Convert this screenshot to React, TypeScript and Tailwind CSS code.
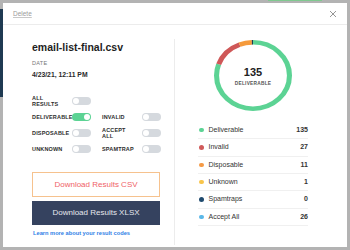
import React from "react";

const font = { fontFamily: "'Liberation Sans', Arial, sans-serif" };

function Toggle({ on = false }: { on?: boolean }) {
  return (
    <div
      className={
        "w-[19px] h-[8px] rounded-full flex items-center px-[1px] shrink-0 " +
        (on ? "bg-[#5cd394] justify-end" : "bg-[#d5d9de] justify-start")
      }
    >
      <div className="w-[6px] h-[6px] rounded-full bg-white" />
    </div>
  );
}

function Label({ children }: { children: React.ReactNode }) {
  return (
    <div className="w-[40px] text-[5.5px] leading-[6px] font-bold tracking-[0.03em] text-[#2d2d2d] uppercase">
      {children}
    </div>
  );
}

const legend = [
  { name: "Deliverable", value: 135, color: "#5cd394" },
  { name: "Invalid", value: 27, color: "#d05a5a" },
  { name: "Disposable", value: 11, color: "#f59a45" },
  { name: "Unknown", value: 1, color: "#f8c54a" },
  { name: "Spamtraps", value: 0, color: "#1f4a6e" },
  { name: "Accept All", value: 26, color: "#5ab8e8" },
];

function Donut() {
  const segs = [
    { start: 0, len: 80.5, color: "#5cd394" },
    { start: 80.5, len: 13.5, color: "#cf5858" },
    { start: 94, len: 5.5, color: "#f59a3b" },
    { start: 99.5, len: 0.5, color: "#1f3a52" },
  ];
  return (
    <div className="relative w-[78px] h-[71px] ml-[16px]">
      <svg width="78" height="71" viewBox="0 0 100 100" preserveAspectRatio="none" className="absolute inset-0">
        <g transform="rotate(-90 50 50)">
          {segs.map((s, i) => (
            <circle
              key={i}
              cx="50"
              cy="50"
              r="46.75"
              fill="none"
              stroke={s.color}
              strokeWidth="6.5"
              pathLength={100}
              strokeDasharray={`${s.len} ${100 - s.len}`}
              strokeDashoffset={-s.start}
            />
          ))}
        </g>
      </svg>
      <div className="absolute inset-0 flex flex-col items-center justify-center pt-[1px]">
        <div className="text-[11px] leading-[11px] font-bold text-[#222]">135</div>
        <div className="text-[4.8px] leading-[5px] font-bold tracking-[0.05em] text-[#555] mt-[3px]">DELIVERABLE</div>
      </div>
    </div>
  );
}

export default function App() {
  return (
    <div className="relative w-[350px] h-[250px] bg-[#b3b3b3] overflow-hidden p-[3px]" style={font}>
      <div className="absolute left-0 top-[9px] w-[3px] h-[88px] bg-[#1f3a52]" />
      <div className="absolute left-[268px] top-0 w-[54px] h-[1px] bg-[#7fc98f]" />
      <div className="relative w-[344px] h-[244px] bg-white flex flex-col">
        <div className="h-[22px] shrink-0 border-b border-[#ececec] flex items-center justify-between pl-[10px] pr-[10px]">
          <span className="text-[6.5px] text-[#9a9a9a] underline decoration-[#c8c8c8]">Delete</span>
          <svg width="8" height="8" viewBox="0 0 8 8" className="mt-[1px]">
            <path d="M1 1L7 7M7 1L1 7" stroke="#8a8a8a" strokeWidth="0.9" />
          </svg>
        </div>
        <div className="flex flex-1 min-h-0">
          <div className="w-[171px] shrink-0 pl-[29px] pt-[16px] flex flex-col">
            <div className="text-[10.5px] leading-[13px] font-bold text-[#1e1e1e]">email-list-final.csv</div>
            <div className="text-[5.5px] leading-[6px] text-[#777] mt-[6px] tracking-[0.05em]">DATE</div>
            <div className="text-[6.8px] leading-[8px] font-bold text-[#2a2a2a] mt-[5px]">4/23/21, 12:11 PM</div>
            <div className="mt-[16px] flex flex-col gap-[4px]">
              <div className="flex items-center h-[12px]">
                <Label>ALL<br />RESULTS</Label>
                <Toggle />
              </div>
              <div className="flex items-center h-[12px]">
                <Label>DELIVERABLE</Label>
                <Toggle on />
                <div className="ml-[11px] flex items-center">
                  <Label>INVALID</Label>
                  <Toggle />
                </div>
              </div>
              <div className="flex items-center h-[12px]">
                <Label>DISPOSABLE</Label>
                <Toggle />
                <div className="ml-[11px] flex items-center">
                  <Label>ACCEPT<br />ALL</Label>
                  <Toggle />
                </div>
              </div>
              <div className="flex items-center h-[12px]">
                <Label>UNKNOWN</Label>
                <Toggle />
                <div className="ml-[11px] flex items-center">
                  <Label>SPAMTRAP</Label>
                  <Toggle />
                </div>
              </div>
            </div>
            <div className="mt-[17px] w-[128px] h-[25px] border border-[#f6c28e] flex items-center justify-center text-[8px] text-[#ef5f67]">
              Download Results CSV
            </div>
            <div className="mt-[4px] w-[128px] h-[24px] bg-[#35425f] flex items-center justify-center text-[8px] text-[#e6e8ee]">
              Download Results XLSX
            </div>
            <div className="mt-[5px] ml-[1px] text-[5.7px] leading-[7px] font-bold text-[#2f80e6]">Learn more about your result codes</div>
          </div>
          <div className="w-px bg-[#ececec] mt-[14px] mb-[2px]" />
          <div className="flex-1 pl-[23px] pt-[15px] flex flex-col">
            <Donut />
            <div className="mt-[11px] w-[110px] flex flex-col">
              {legend.map((l) => (
                <div key={l.name} className="h-[17.33px] border-b border-[#f0f0f0] flex items-center justify-between pl-[1px]">
                  <div className="flex items-center">
                    <div className="w-[4.5px] h-[4.5px] rounded-full mr-[5px]" style={{ backgroundColor: l.color }} />
                    <span className="text-[7px] text-[#333]">{l.name}</span>
                  </div>
                  <span className="text-[7px] font-bold text-[#333]">{l.value}</span>
                </div>
              ))}
            </div>
          </div>
        </div>
      </div>
    </div>
  );
}
